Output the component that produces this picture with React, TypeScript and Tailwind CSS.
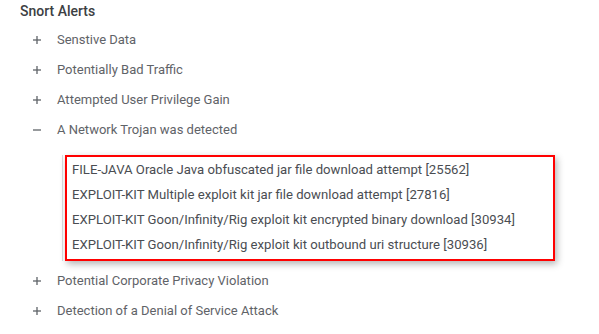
import * as React from "react";

const before = ["Senstive Data", "Potentially Bad Traffic", "Attempted User Privilege Gain"];
const after = ["Potential Corporate Privacy Violation", "Detection of a Denial of Service Attack"];
const rules = [
  "FILE-JAVA Oracle Java obfuscated jar file download attempt [25562]",
  "EXPLOIT-KIT Multiple exploit kit jar file download attempt [27816]",
  "EXPLOIT-KIT Goon/Infinity/Rig exploit kit encrypted binary download [30934]",
  "EXPLOIT-KIT Goon/Infinity/Rig exploit kit outbound uri structure [30936]",
];

function Toggle({ open }: { open?: boolean }) {
  return (
    <svg width="10" height="10" viewBox="0 0 10 10" className="text-[#5f6368]">
      <line x1="1" y1="5" x2="9" y2="5" stroke="currentColor" strokeWidth="1.3" />
      {!open && <line x1="5" y1="1" x2="5" y2="9" stroke="currentColor" strokeWidth="1.3" />}
    </svg>
  );
}

function Row({ label, open }: { label: string; open?: boolean }) {
  return (
    <div className="flex h-[30px] items-center">
      <div className="flex w-[25px] justify-start">
        <Toggle open={open} />
      </div>
      <span>{label}</span>
    </div>
  );
}

export default function App() {
  return (
    <div className="min-h-screen w-[599px] bg-white font-['Roboto',sans-serif] text-[13px] text-[#5f6368]">
      <div className="flex h-[22px] items-center pl-[20px] pt-[1px] text-[14px] font-medium text-[#3c4043]">
        Snort Alerts
      </div>
      <div className="mt-[3px] pl-[32px]">
        {before.map((b) => (
          <Row key={b} label={b} />
        ))}
        <Row label="A Network Trojan was detected" open />
      </div>
      <div className="ml-[62px] mt-[10px] w-[493px] border-l border-[#dadce0] pl-[2px]">
        <div className="border-2 border-[#ff0000] pb-[2px] pl-[5px] text-[13.15px] shadow-[2px_3px_7px_rgba(0,0,0,0.3)]">
          {rules.map((r) => (
            <div key={r} className="flex h-[25px] items-center text-[#4a4d52]">
              {r}
            </div>
          ))}
        </div>
      </div>
      <div className="mt-[5px] pl-[32px]">
        {after.map((a) => (
          <Row key={a} label={a} />
        ))}
      </div>
    </div>
  );
}
